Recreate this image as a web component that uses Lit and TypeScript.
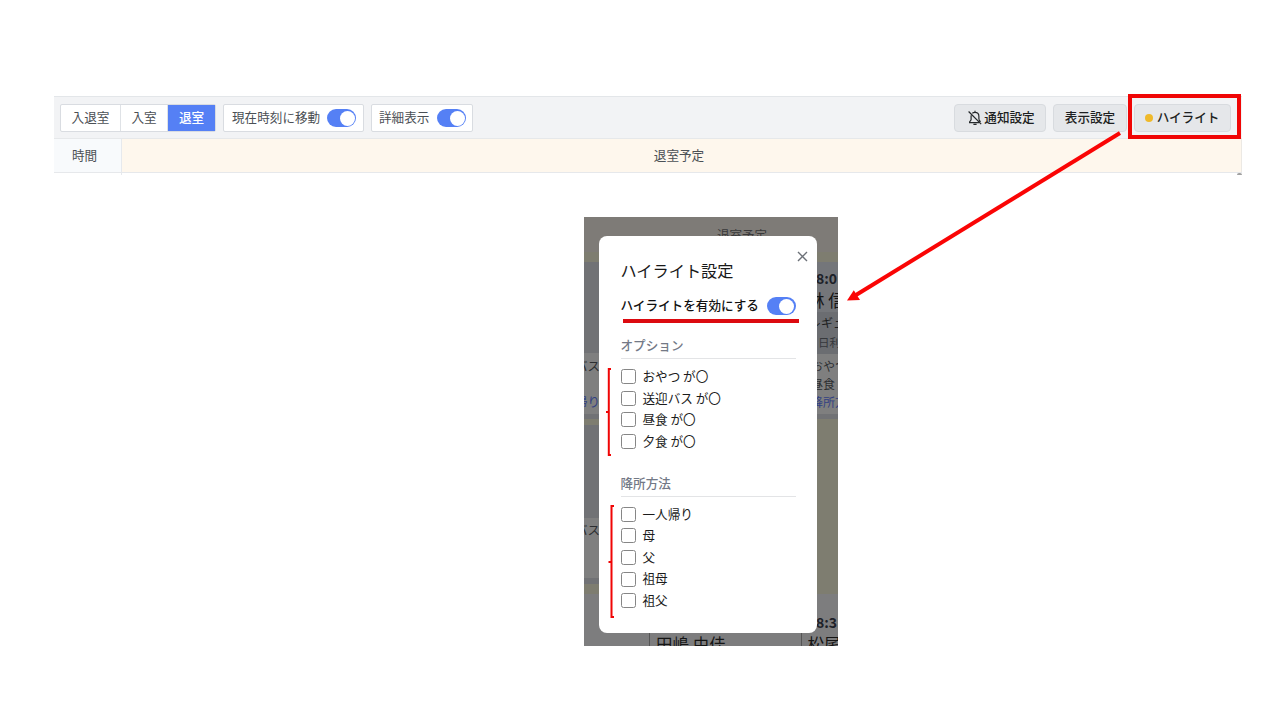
import { LitElement, html, css, svg } from "lit";
import { customElement, property } from "lit/decorators.js";

const base = css`
  *, *::before, *::after { box-sizing: border-box; }
`;

@customElement("toggle-switch")
class ToggleSwitch extends LitElement {
  static styles = [base, css`
    :host { display: block; width: 29px; height: 18px; flex: none; }
    .track { width: 100%; height: 100%; border-radius: 9px; background: #5580f5; padding: 1.5px; display: flex; justify-content: flex-end; }
    .knob { width: 15px; height: 15px; border-radius: 50%; background: #fff; }
  `];
  render() {
    return html`<div class="track"><div class="knob"></div></div>`;
  }
}

@customElement("tool-bar")
class ToolBar extends LitElement {
  static styles = [base, css`
    :host { display: block; }
    .bar { height: 43px; background: #f2f3f5; border-top: 1px solid #e3e6e9; border-bottom: 1px solid #e6e8ea; padding: 7px 11px 0 6px; display: flex; align-items: flex-start; gap: 7px; color: #4b5055; }
    .seg { display: flex; height: 28px; width: 156px; border: 1px solid #d9dce1; border-radius: 2px; background: #fff; }
    .seg span { display: flex; align-items: center; justify-content: center; border-right: 1px solid #dfe2e6; padding-bottom: 2px; }
    .a { width: 60px; }
    .b { width: 47px; }
    .seg .on { flex: 1; background: #5580f5; color: #fff; border: 0; font-weight: 500; }
    .box { height: 28px; display: flex; align-items: center; justify-content: space-between; border: 1px solid #d9dce1; border-radius: 2px; background: #fff; padding: 0 6px 0 7px; }
    .box span, .btn span { padding-bottom: 2px; }
    .w1 { width: 141px; padding: 0 7px 0 8px; }
    .w2 { width: 102px; }
    .grow { flex: 1; }
    .btn { height: 28px; display: flex; align-items: center; justify-content: center; background: #e5e7ea; border: 1px solid #d8dbdf; border-radius: 4px; color: #1d1f22; font-weight: 500; }
    .n { width: 92px; gap: 2px; padding-left: 3px; }
    .d { width: 74px; }
    .h { width: 97px; gap: 4px; padding-right: 1px; }
    .dot { width: 8px; height: 8px; border-radius: 50%; background: #efb92a; }
    .head { display: flex; height: 34px; border-bottom: 1px solid #e6e8eb; color: #4b5055; }
    .time { width: 68px; background: #f8fafc; border-right: 1px solid #e6e9ed; display: flex; align-items: center; justify-content: center; padding: 0 6px 1px 0; }
    .plan { flex: 1; background: #fef7ed; border-right: 1px solid #ece9e4; display: flex; align-items: center; justify-content: center; padding: 0 5px 1px 0; }
    .foot { display: flex; justify-content: space-between; height: 2px; }
    .line { width: 68px; border-right: 1px solid #e6e9ed; }
    .thumb { width: 5px; height: 2px; border-radius: 3px 3px 0 0; background: #a0a0a0; }
  `];
  render() {
    return html`
      <div class="bar">
        <div class="seg"><span class="a">入退室</span><span class="b">入室</span><span class="on">退室</span></div>
        <div class="box w1"><span>現在時刻に移動</span><toggle-switch></toggle-switch></div>
        <div class="box w2"><span>詳細表示</span><toggle-switch></toggle-switch></div>
        <div class="grow"></div>
        <div class="btn n">
          <svg width="14" height="16" viewBox="0 0 14 16" fill="none" stroke="#25282b" stroke-width="1.2">
            <path d="M.6 1.500 13.200 14.200M4.300 3.200C5 2.700 6 2.400 7 2.400c2.400 0 3.900 1.700 3.900 4v3.200M3.200 5.300c-.1.400-.1.800-.1 1.200v3.400L1.600 12v.6H11.200M7 .8v1.600M10.900 9.700l1.600 2.200M5.400 14.300h3.200"/>
          </svg><span>通知設定</span></div>
        <div class="btn d"><span>表示設定</span></div>
        <div class="btn h"><i class="dot"></i><span>ハイライト</span></div>
      </div>
      <div class="head"><div class="time">時間</div><div class="plan">退室予定</div></div>
      <div class="foot"><div class="line"></div><div class="thumb"></div></div>
    `;
  }
}

@customElement("check-group")
class CheckGroup extends LitElement {
  @property() heading = "";
  @property({ attribute: false }) items: string[] = [];
  static styles = [base, css`
    :host { display: block; }
    .heading { height: 26px; line-height: 24px; border-bottom: 1px solid #e3e4e6; color: #737986; font-weight: 500; }
    .list { padding-top: 7px; }
    .row { height: 21.6px; display: flex; align-items: center; gap: 7px; color: #1c1c1c; white-space: pre; }
    .row span { padding-bottom: 2px; }
    .box { width: 15px; height: 15px; border: 1px solid #868686; border-radius: 2.5px; background: #fff; flex: none; }
  `];
  render() {
    return html`
      <div class="heading">${this.heading}</div>
      <div class="list">${this.items.map((t) => html`<div class="row"><i class="box"></i><span>${t}</span></div>`)}</div>
    `;
  }
}

@customElement("highlight-dialog")
class HighlightDialog extends LitElement {
  static styles = [base, css`
    :host { display: block; }
    .card { height: 397px; background: #fff; border-radius: 8px; padding: 22px 21.5px 0 21.5px; position: relative; }
    .close { position: absolute; right: 9px; top: 15px; }
    .title { font-size: 16.2px; line-height: 24px; color: #191919; }
    .enable { display: flex; align-items: center; justify-content: space-between; margin-top: 14px; height: 20px; font-weight: 500; color: #111; }
    .enable span { padding-bottom: 2px; }
    .one { margin-top: 17px; }
    .two { margin-top: 18.2px; }
  `];
  render() {
    return html`
      <div class="card">
        <svg class="close" width="11" height="11" viewBox="0 0 11 11" stroke="#6c7178" stroke-width="1.4"><path d="M1 1l9 9M10 1l-9 9"/></svg>
        <div class="title">ハイライト設定</div>
        <div class="enable"><span>ハイライトを有効にする</span><toggle-switch></toggle-switch></div>
        <check-group class="one" heading="オプション" .items=${["おやつ が〇", "送迎バス が〇", "昼食 が〇", "夕食 が〇"]}></check-group>
        <check-group class="two" heading="降所方法" .items=${["一人帰り", "母", "父", "祖母", "祖父"]}></check-group>
      </div>
    `;
  }
}

const backdrop = svg`
  <rect width="254" height="429" fill="#7d7d7e"/>
  <rect width="254" height="35" fill="#7e7b77"/>
  <rect y="35" width="254" height="10" fill="#7e7d70"/>
  <rect y="45" width="16" height="91" fill="#717275"/>
  <rect y="136" width="16" height="61" fill="#7f7f7f"/>
  <rect y="197" width="16" height="5" fill="#717275"/>
  <rect y="202" width="16" height="6" fill="#7e7d70"/>
  <rect y="208" width="16" height="93" fill="#717275"/>
  <rect y="301" width="16" height="60" fill="#7f7f7f"/>
  <rect y="361" width="16" height="6" fill="#717275"/>
  <rect y="367" width="16" height="10" fill="#7e7d70"/>
  <rect x="232" y="45" width="22" height="50" fill="#74767a"/>
  <rect x="232" y="95" width="22" height="42" fill="#6b6d71"/>
  <rect x="232" y="137" width="22" height="60" fill="#7f7f7f"/>
  <rect x="232" y="197" width="22" height="5" fill="#717275"/>
  <rect x="232" y="202" width="22" height="175" fill="#7e7d70"/>
  <path d="M65.5 415v14M217.5 415v14" stroke="#555" fill="none"/>
  <g fill="#2c2e31" font-size="12.5">
    <text x="133" y="23" fill="#39393a">退室予定</text>
    <g font-size="14" font-weight="700" fill="#1d2128"><text x="232" y="66.500">8:0</text><text x="232" y="410.500">8:3</text></g>
    <g font-size="16.500" fill="#151515"><text x="224" y="90">林 信</text><text x="72" y="434">田嶋 由佳</text><text x="223.500" y="434">松尾</text></g>
    <g font-size="12"><text x="225" y="111" fill="#1c1d20">レギュ</text>
    <text x="234" y="130" font-size="11.500" fill="#36383c">日利</text>
    <text x="227" y="154">おやつ</text>
    <text x="227" y="172">昼食</text>
    <text x="227" y="190" fill="#323f82">降所方</text></g>
    <text x="-9" y="154">バス</text>
    <text x="-9" y="190" fill="#323f82">帰り</text>
    <text x="-9" y="318">バス</text>
  </g>
`;

@customElement("app-root")
class AppRoot extends LitElement {
  static styles = [base, css`
    :host { display: block; position: relative; width: 1280px; height: 720px; overflow: hidden; background: #fff; font-family: "Noto Sans CJK JP", sans-serif; font-size: 12.6px; line-height: 1.4; }
    .slide { display: flex; flex-direction: column; padding: 96px 38px 0 54px; gap: 42px; }
    .shot { position: relative; width: 254px; height: 429px; margin-left: 530px; overflow: hidden; padding: 19px 21px 0 15px; }
    .scene { position: absolute; left: 0; top: 0; }
    .marks { position: absolute; left: 0; top: 0; }
  `];
  render() {
    return html`
      <div class="slide">
        <tool-bar></tool-bar>
        <div class="shot">
          <svg class="scene" width="254" height="429">${backdrop}</svg>
          <highlight-dialog></highlight-dialog>
        </div>
      </div>
      <svg class="marks" width="1280" height="720" fill="none" stroke="#f00505">
        <rect x="1130" y="96" width="109" height="41" stroke="#f00505" stroke-width="4"/>
        <path d="M1120 133 856 295" stroke="#fa0505" stroke-width="4"/>
        <path d="M847 300.500 853.800 290.200 860 300Z" fill="#fa0505" stroke="none"/>
        <path d="M623 321H799" stroke="#dc0a10" stroke-width="4"/>
        <path d="M611 369H608.800V455H611M606 412H608.500" stroke-width="2"/>
        <path d="M614 506H611.500V617H614M608.500 562H611.500" stroke-width="2"/>
      </svg>
    `;
  }
}
